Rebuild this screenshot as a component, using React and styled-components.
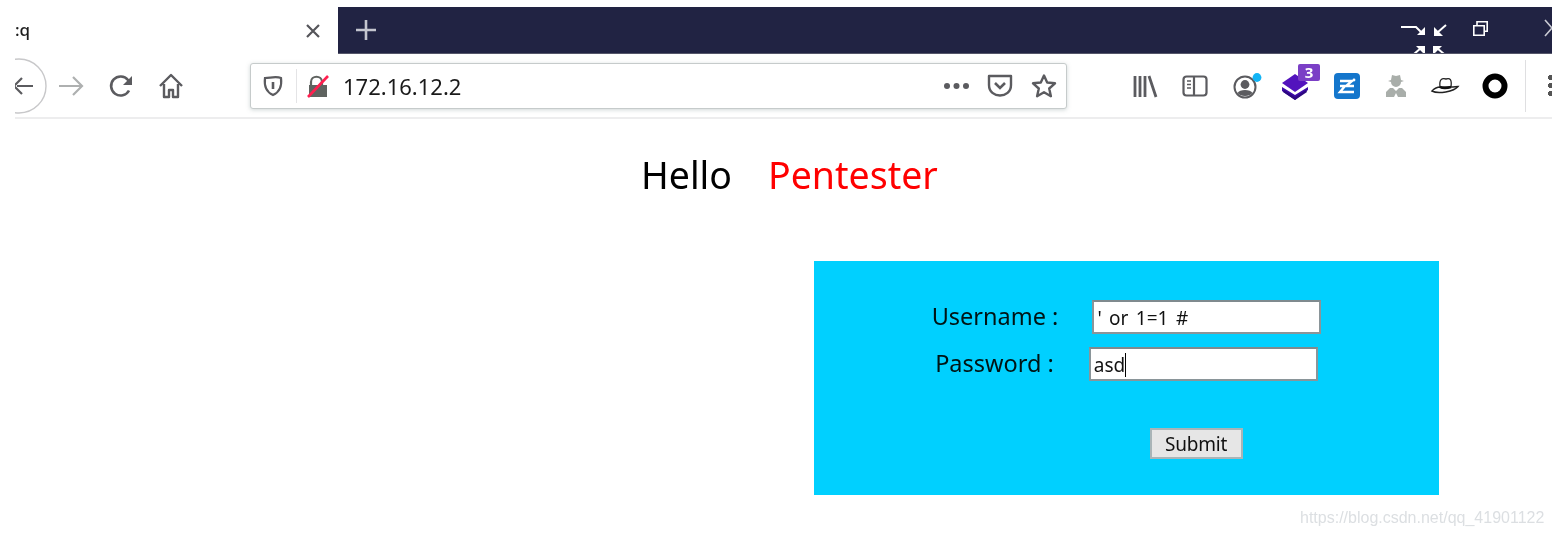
import React from "react";
import styled, { createGlobalStyle } from "styled-components";

const GlobalStyle = createGlobalStyle`
  html, body {
    margin: 0;
    padding: 0;
    background: #fff;
    font-family: "Noto Sans", "Liberation Sans", sans-serif;
  }
`;

const Page = styled.div`
  position: relative;
  width: 1552px;
  height: 536px;
  overflow: hidden;
  background: #fff;
  filter: blur(0.45px);
`;

const Browser = styled.div`
  margin: 7px 0 0 15px;
`;

const TabStrip = styled.div`
  display: flex;
  height: 47px;
`;

const ActiveTab = styled.div`
  width: 323px;
  display: flex;
  align-items: center;
  justify-content: space-between;
  padding-right: 16px;
  box-sizing: border-box;
  background: #fff;
  color: #1c1c1c;
  font-size: 17px;
  font-weight: 500;
`;

const TabTitle = styled.span`
  margin-top: -2px;
`;

const DarkStrip = styled.div`
  flex: 1;
  display: flex;
  align-items: center;
  justify-content: space-between;
  background: #212343;
  border-bottom: 1px solid #55566a;
  box-sizing: border-box;
  padding-left: 16px;
`;

const Toolbar = styled.div`
  display: flex;
  align-items: center;
  height: 63px;
  border-bottom: 2px solid #ededee;
  overflow: hidden;
`;

const Slot = styled.div`
  flex: none;
  width: ${(p) => p.$w || 50}px;
  height: 30px;
  display: flex;
  align-items: center;
  justify-content: center;

  & > svg {
    flex: none;
    overflow: visible;
  }
`;

const BackSlot = styled.div`
  flex: none;
  width: 33px;
  height: 64px;
  margin-right: -2px;
`;

const NavGroup = styled.div`
  display: flex;
`;

const UrlBar = styled.div`
  flex: none;
  width: 817px;
  height: 46px;
  margin-left: 54px;
  display: flex;
  align-items: center;
  box-sizing: border-box;
  border: 1px solid #c6cbcb;
  border-radius: 3px;
  box-shadow: 0 1px 4px rgba(120, 140, 140, 0.35);
  background: #fff;
`;

const UrlDivider = styled.span`
  width: 1px;
  height: 34px;
  background: #e4e4e6;
  margin: 0 10px 0 1px;
`;

const UrlText = styled.span`
  flex: 1;
  font-size: 22px;
  color: #1a1a1a;
  margin-left: 14px;
`;

const ExtGroup = styled.div`
  flex: none;
  display: flex;
  margin-left: 53px;
`;

const ToolbarRule = styled.span`
  flex: none;
  width: 1px;
  height: 52px;
  background: #dfdfe1;
  margin-left: 5px;
`;

const MenuDots = styled.div`
  flex: none;
  margin-left: 22px;
  width: 5px;
  height: 22px;
  background: radial-gradient(circle at 2.5px 2.5px, #555 2.4px, transparent 2.6px) 0 0 / 5px 8px repeat-y;
`;

const Greeting = styled.h1`
  margin: 28px 0 0;
  display: flex;
  gap: 36px;
  padding-left: 641px;
  font-size: 37.5px;
  line-height: 56px;
  font-weight: 400;
  color: #000;
  font-family: "Noto Sans", "Open Sans", sans-serif;
`;

const Accent = styled.span`
  color: #ff0000;
`;

const FormPanel = styled.form`
  width: 625px;
  height: 234px;
  margin: 58px 0 0 814px;
  padding-top: 39px;
  box-sizing: border-box;
  background: #00d0ff;
  color: #001414;
`;

const Row = styled.div`
  display: flex;
  justify-content: center;
  align-items: center;
  gap: ${(p) => p.$gap}px;
  height: 34px;
  margin-bottom: 13px;
`;

const Label = styled.label`
  font-size: 23.5px;
  line-height: 30px;
  margin-top: -2px;
`;

const Field = styled.div`
  width: 229px;
  height: 34px;
  box-sizing: border-box;
  border: 2px solid #8a9599;
  border-top-color: #7f8a8e;
  background: #fff;
  padding: 0 3px;
  font-size: 19px;
  line-height: 32px;
  word-spacing: 2.5px;
  color: #111;
  white-space: pre;
  font-family: "Noto Sans", sans-serif;
`;

const Caret = styled.span`
  display: inline-block;
  width: 1px;
  height: 24px;
  background: #000;
  vertical-align: -5px;
`;

const SubmitRow = styled.div`
  display: flex;
  justify-content: center;
  margin: 47px 0 0 139px;
`;

const SubmitButton = styled.button`
  width: 93px;
  height: 31px;
  padding: 0;
  border: 2px solid #a9b4b7;
  background: #e6e6e6;
  color: #111;
  font-size: 19px;
  font-family: "Noto Sans", sans-serif;
  letter-spacing: -0.2px;
`;

const Watermark = styled.span`
  position: absolute;
  left: 1300px;
  top: 507px;
  color: #dcdfe2;
  font-size: 16px;
  line-height: 22px;
  white-space: nowrap;
  font-family: "Liberation Sans", sans-serif;
`;

const Ico = ({ w = 26, h = 26, children }) => (
  <svg width={w} height={h} viewBox={`0 0 ${w} ${h}`} fill="none">
    {children}
  </svg>
);

const grey = "#5b5b5f";

const WindowControls = () => (
  <svg width="197" height="46" viewBox="0 0 197 46" fill="none" stroke="#fff" strokeWidth="2">
    <path d="M46 20H61l6 6" />
    <path d="M70 20v8h-8z" fill="#fff" stroke="none" />
    <path d="M91 18l-8 7" />
    <path d="M79 20v9h9z" fill="#fff" stroke="none" />
    <path d="M70 39h-9l9 9z" fill="#fff" stroke="none" />
    <path d="M66 41l-7 6" />
    <path d="M78 39h9l-9 9z" fill="#fff" stroke="none" />
    <path d="M82 41l7 6" />
    <path d="M118.8 18.8h10.4v9.4h-10.4zM122 18v-3.2h10.2v9.4H129" strokeWidth="1.6" />
    <path d="M190 13l7 8M190 29l7-8" strokeWidth="1.6" stroke="#c9cad3" />
  </svg>
);

const AccountIcon = () => (
  <Ico w={24} h={26}>
    <circle cx="12" cy="14" r="10.5" stroke={grey} strokeWidth="2" />
    <circle cx="12" cy="11.5" r="4.4" fill={grey} />
    <path d="M4.5 20c2-4 13-4 15 0-3 4-12 4-15 0z" fill={grey} />
    <circle cx="24" cy="4.5" r="4.4" fill="#12b4f5" />
  </Ico>
);

const StackIcon = () => (
  <svg width="52" height="44" viewBox="0 0 52 44" fill="none">
    <path d="M12 19l13-9 13 9-13 9z" fill="#5313bd" />
    <path d="M12 23l13 8 13-8v3L25 36l-13-9z" fill="#3e0aa8" />
    <path d="M14 26l11 7 11-7 1 2-12 8-12-8z" fill="#2d0780" />
    <rect x="28" y="0" width="22" height="17" rx="2" fill="#7b3fc6" />
    <text x="39" y="14" fill="#fff" fontSize="15" fontWeight="700" textAnchor="middle" fontFamily="Noto Sans">3</text>
  </svg>
);

const ZIcon = () => (
  <Ico>
    <rect width="26" height="26" rx="4" fill="#1476cc" />
    <path d="M6 8h12l-6 5h8M6 13h5l-5 6h14" stroke="#fff" strokeWidth="2.4" />
    <circle cx="20" cy="7" r="1.4" fill="#fff" />
  </Ico>
);

const SpyIcon = () => (
  <Ico w={22} h={24}>
    <path d="M6 6l1-5 4 1 4-1 1 5 3 1-3 1a5 5 0 0 1-10 0L3 7z" fill="#a9aeaa" />
    <path d="M5 14h3l3 3 3-3h3l4 4v5h-8l-2-4-2 4H1v-5z" fill="#a9aeaa" />
  </Ico>
);

const HatIcon = () => (
  <Ico w={28} h={18}>
    <path d="M9 10c-1-8 2-9 6-8 4-1 6 0 5 8z" fill="#fff" stroke="#222" strokeWidth="1.3" />
    <path d="M1 14c3-3 6-4 8-4 4 2 8 1 11 0 3 0 5-.5 7-.5-4 5-20 8-26 4.500z" fill="#fff" stroke="#222" strokeWidth="1.5" />
    <path d="M9 10c4 2 8 1 11 0" stroke="#111" strokeWidth="2.4" />
  </Ico>
);

export default function App() {
  return (
    <Page>
      <GlobalStyle />
      <Browser>
        <TabStrip>
          <ActiveTab>
            <TabTitle>:q</TabTitle>
            <Ico w={18} h={18}>
              <path d="M3 3l12 12M15 3L3 15" stroke="#55555a" strokeWidth="2.2" />
            </Ico>
          </ActiveTab>
          <DarkStrip>
            <Ico w={24} h={24}>
              <path d="M12 2v20M2 12h20" stroke="#c4c5cf" strokeWidth="2.6" />
            </Ico>
            <WindowControls />
          </DarkStrip>
        </TabStrip>
        <Toolbar>
          <BackSlot>
            <svg width="33" height="64" viewBox="0 0 33 64" fill="none">
              <circle cx="4" cy="32" r="27" stroke="#c8c8ca" strokeWidth="1.4" />
              <path d="M2 32h16M7 24l-8 8 8 8" stroke={grey} strokeWidth="2.2" />
            </svg>
          </BackSlot>
          <NavGroup>
            <Slot>
              <Ico>
                <path d="M1 13h23M15 4l9 9-9 9" stroke="#aeb0b0" strokeWidth="2.2" />
              </Ico>
            </Slot>
            <Slot>
              <Ico>
                <path d="M21 17.500A9.500 9.500 0 1 1 20 7l2.500 3" stroke={grey} strokeWidth="2.6" />
                <path d="M24 3v9h-9z" fill={grey} />
              </Ico>
            </Slot>
            <Slot>
              <Ico>
                <path d="M2 13L13 2l11 11M6 11v13h5v-7h4v7h5V11" stroke={grey} strokeWidth="2.4" strokeLinejoin="round" />
              </Ico>
            </Slot>
          </NavGroup>
          <UrlBar>
            <Slot $w={44}>
              <Ico w={20} h={22}>
                <path d="M2 3c5 0 11-2 16 0 1 8-1 14-8 17C3 17 1 11 2 3z" stroke={grey} strokeWidth="2.2" />
                <path d="M10 7v7" stroke={grey} strokeWidth="2.6" />
              </Ico>
            </Slot>
            <UrlDivider />
            <Ico w={22} h={24}>
              <path d="M4 12V8c0-7 11-7 11 0v4" stroke="#5f6360" strokeWidth="2.2" />
              <path d="M2 11h18v12H2z" fill="#5f6360" />
              <path d="M1 23L21 2" stroke="#ff1f4f" strokeWidth="2.6" />
            </Ico>
            <UrlText>172.16.12.2</UrlText>
            <Slot $w={43}>
              <Ico w={27} h={8}>
                <circle cx="4" cy="4" r="3" fill={grey} />
                <circle cx="13.5" cy="4" r="3" fill={grey} />
                <circle cx="23" cy="4" r="3" fill={grey} />
              </Ico>
            </Slot>
            <Slot $w={43}>
              <Ico>
                <path d="M2 3h22v9c0 14-22 14-22 0z" stroke={grey} strokeWidth="2.4" strokeLinejoin="round" />
                <path d="M8 10l5 5 5-5" stroke={grey} strokeWidth="2.6" />
              </Ico>
            </Slot>
            <Slot $w={45}>
              <Ico>
                <path d="M13 2.500l3.200 7 7.800.8-5.800 5.200 1.700 7.700-6.900-4-6.900 4 1.700-7.700L2 10.300l7.800-.8z" stroke={grey} strokeWidth="2.4" strokeLinejoin="round" />
              </Ico>
            </Slot>
          </UrlBar>
          <ExtGroup>
            <Slot>
              <Ico>
                <path d="M3 3v21M8 3v21M13 3v21M17 3l7 21" stroke={grey} strokeWidth="2.8" />
              </Ico>
            </Slot>
            <Slot>
              <Ico>
                <rect x="1.500" y="3.500" width="23" height="19" rx="3" stroke={grey} strokeWidth="2.2" />
                <path d="M12 4v18" stroke={grey} strokeWidth="2.2" />
                <path d="M5 8h4M5 11.500h4M5 15h4" stroke={grey} strokeWidth="1.4" />
              </Ico>
            </Slot>
            <Slot><AccountIcon /></Slot>
            <Slot $w={51}><StackIcon /></Slot>
            <Slot $w={51}><ZIcon /></Slot>
            <Slot $w={47}><SpyIcon /></Slot>
            <Slot $w={51}><HatIcon /></Slot>
            <Slot>
              <Ico>
                <circle cx="13" cy="13" r="9.500" stroke="#000" strokeWidth="6" />
              </Ico>
            </Slot>
          </ExtGroup>
          <ToolbarRule />
          <MenuDots />
        </Toolbar>
      </Browser>
      <Greeting>
        <span>Hello</span>
        <Accent>Pentester</Accent>
      </Greeting>
      <FormPanel onSubmit={(e) => e.preventDefault()}>
        <Row $gap={34}>
          <Label>Username :</Label>
          <Field>' or 1=1 #</Field>
        </Row>
        <Row $gap={35}>
          <Label>Password :</Label>
          <Field>asd<Caret /></Field>
        </Row>
        <SubmitRow>
          <SubmitButton type="submit">Submit</SubmitButton>
        </SubmitRow>
      </FormPanel>
      <Watermark>https://blog.csdn.net/qq_41901122</Watermark>
    </Page>
  );
}
